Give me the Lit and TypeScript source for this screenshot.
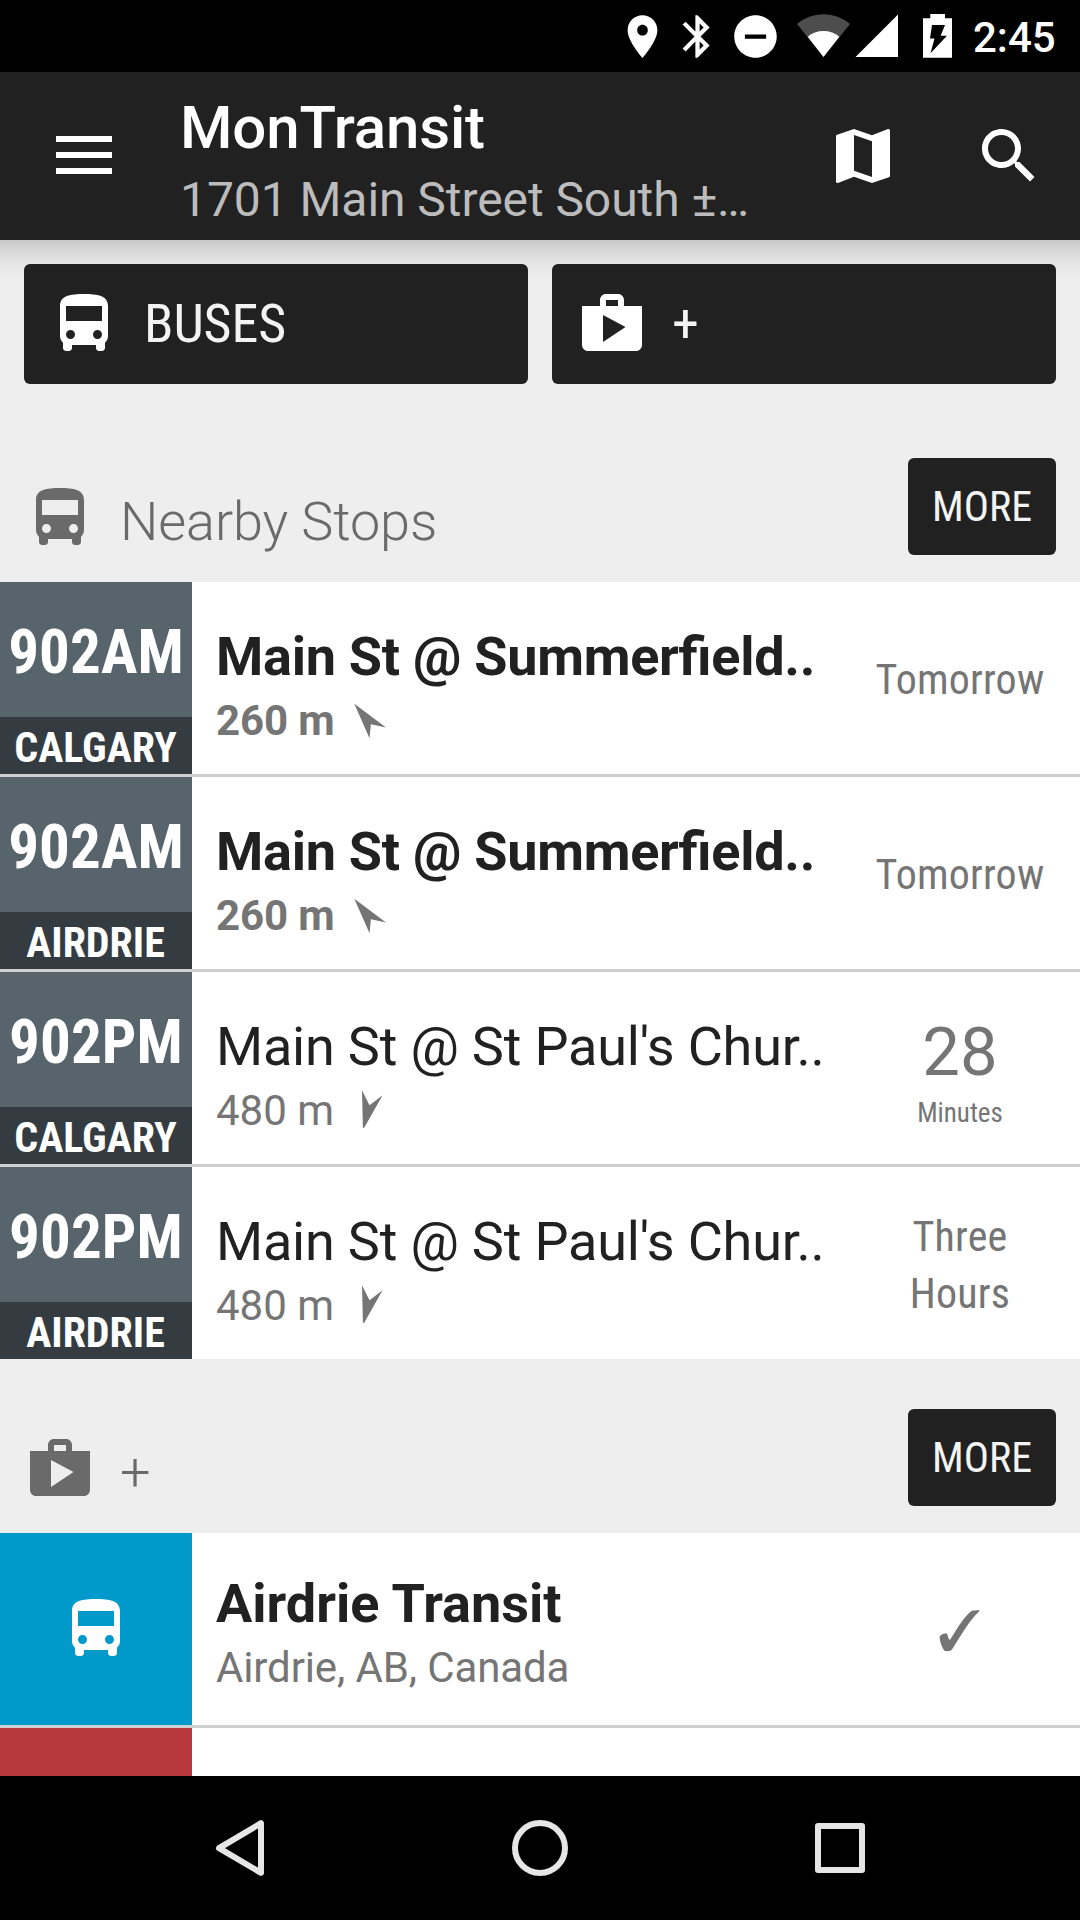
import { LitElement, html, css, svg } from "lit";
import { customElement, property } from "lit/decorators.js";
import { classMap } from "lit/directives/class-map.js";

const PATHS: Record<string, string> = {
  bus: "M4 16c0 .88.39 1.67 1 2.22V20c0 .55.45 1 1 1h1c.55 0 1-.45 1-1v-1h8v1c0 .55.45 1 1 1h1c.55 0 1-.45 1-1v-1.78c.61-.55 1-1.34 1-2.22V6c0-3.5-3.58-4-8-4s-8 .5-8 4v10zm3.5 1c-.83 0-1.5-.67-1.5-1.5S6.67 14 7.5 14s1.5.67 1.5 1.5S8.33 17 7.5 17zm9 0c-.83 0-1.5-.67-1.5-1.5s.67-1.5 1.5-1.5 1.5.67 1.5 1.5-.67 1.5-1.5 1.5zm1.5-6H6V6h12v5z",
  shop: "M16 6V4c0-1.11-.89-2-2-2h-4c-1.11 0-2 .89-2 2v2H2v13c0 1.11.89 2 2 2h16c1.11 0 2-.89 2-2V6h-6zm-6-2h4v2h-4V4zM9 18V9l7.5 4L9 18z",
  map: "M20.5 3l-.16.03L15 5.1 9 3 3.36 4.9c-.21.07-.36.25-.36.48V20.5c0 .28.22.5.5.5l.16-.03L9 18.9l6 2.1 5.64-1.9c.21-.07.36-.25.36-.48V3.5c0-.28-.22-.5-.5-.5zM15 19l-6-2.11V5l6 2.11V19z",
  search: "M15.5 14h-.79l-.28-.27C15.41 12.59 16 11.11 16 9.5 16 5.91 13.09 3 9.5 3S3 5.91 3 9.5 5.91 16 9.5 16c1.61 0 3.09-.59 4.23-1.57l.27.28v.79l5 4.99L20.49 19l-4.99-5zm-6 0C7.01 14 5 11.99 5 9.5S7.01 5 9.5 5 14 7.01 14 9.5 11.99 14 9.5 14z",
  place: "M12 2C8.13 2 5 5.13 5 9c0 5.25 7 13 7 13s7-7.75 7-13c0-3.87-3.13-7-7-7zm0 9.5c-1.38 0-2.5-1.12-2.5-2.5s1.12-2.5 2.5-2.5 2.5 1.12 2.5 2.5-1.12 2.5-2.5 2.5z",
  bluetooth: "M17.71 7.71L12 2h-1v7.59L6.41 5 5 6.41 10.59 12 5 17.59 6.41 19 11 14.41V22h1l5.71-5.71-4.3-4.29 4.3-4.29zM13 5.83l1.88 1.88L13 9.59V5.83zm1.88 10.46L13 18.17v-3.76l1.88 1.88z",
  dnd: "M12 2C6.48 2 2 6.48 2 12s4.48 10 10 10 10-4.48 10-10S17.52 2 12 2zm5 11H7v-2h10v2z",
};

@customElement("md-icon")
class MdIcon extends LitElement {
  @property() name = "bus";
  static styles = css`
    :host { display: block; width: 72px; height: 72px; flex: none; }
    .glyph { display: block; width: 100%; height: 100%; fill: currentColor; }
  `;
  render() {
    return html`<svg class="glyph" viewBox="0 0 24 24"><path d=${PATHS[this.name]} /></svg>`;
  }
}

@customElement("status-bar")
class StatusBar extends LitElement {
  static styles = css`
    :host { display: block; }
    .bar { height: 72px; box-sizing: border-box; background: #000; color: #fff; display: flex; padding-left: 617px; padding-top: 11px; }
    .s { width: 51px; height: 51px; }
    .bt { margin-left: 4px; }
    .dnd { margin-left: 7px; }
    .signals { flex: none; width: 155px; height: 46px; margin: 2px 0 0 16px; }
    .time { font: 500 42px/49px Roboto, sans-serif; margin: 2px 0 0 21px; }
  `;
  render() {
    return html`<div class="bar">
      <md-icon class="s" name="place"></md-icon>
      <md-icon class="s bt" name="bluetooth"></md-icon>
      <md-icon class="s dnd" name="dnd"></md-icon>
      <svg class="signals" viewBox="797 13 155 46">
        <path fill="#4d4d4d" d="M823.5 57L797 24C804.600 17.800 813.700 14.300 823.500 14.300S842.400 17.800 850 24Z" />
        <path fill="#fff" d="M823.500 57L807.700 36.800C812 33 817.500 31 823.500 31S835 33 839.300 36.800Z" />
        <path fill="#fff" d="M855.500 57H898V14.500Z" />
        <path fill="#fff" d="M930.300 14H945V18.300H952V57.700H923V18.300H930.300Z" />
        <path fill="#000" d="M932 25H945L940.600 35.700H947L930.500 53.300L934.500 38.600H930Z" />
      </svg>
      <span class="time">2:45</span>
    </div>`;
  }
}

@customElement("app-bar")
class AppBar extends LitElement {
  static styles = css`
    :host { display: block; }
    .bar { position: relative; height: 168px; background: #212121; color: #fff; display: flex; font-family: Roboto, sans-serif; }
    .menu { width: 56px; margin: 64px 68px 0 56px; display: flex; flex-direction: column; gap: 10px; }
    .line { height: 6px; background: #fff; }
    .titles { width: 647px; padding-top: 21px; }
    .title { font-size: 60px; line-height: 70px; font-weight: 500; letter-spacing: -.15px; }
    .sub { font-size: 48px; line-height: 56px; margin-top: 9px; color: #bcbcbc; white-space: nowrap; letter-spacing: -.06px; }
    .act { margin-top: 48px; }
    .find { margin-left: 74px; }
    .shadow { position: absolute; top: 168px; left: 0; right: 0; height: 40px; z-index: 2;
      background: linear-gradient(rgba(0,0,0,.16), rgba(0,0,0,.11) 20%, rgba(0,0,0,.04) 55%, rgba(0,0,0,0)); }
  `;
  render() {
    return html`<div class="bar">
      <div class="menu"><div class="line"></div><div class="line"></div><div class="line"></div></div>
      <div class="titles">
        <div class="title">MonTransit</div>
        <div class="sub">1701 Main Street South ±…</div>
      </div>
      <md-icon class="act" name="map"></md-icon>
      <md-icon class="act find" name="search"></md-icon>
      <div class="shadow"></div>
    </div>`;
  }
}

@customElement("section-header")
class SectionHeader extends LitElement {
  @property() icon = "bus";
  @property() label = "";
  static styles = css`
    :host { display: block; }
    .head { height: 174px; box-sizing: border-box; display: flex; justify-content: space-between; padding: 50px 24px 27px; font-family: Roboto, sans-serif; }
    .left { display: flex; align-items: center; gap: 24px; height: 72px; margin-top: 24px; color: #6a6a6a; }
    .label { font-size: 54px; line-height: 63px; font-weight: 300; padding-top: 6px; letter-spacing: -.1px; }
    .more { width: 148px; height: 97px; border-radius: 6px; background: #212121; color: #f3f3f3; display: flex; align-items: center; justify-content: center;
      font-family: "Roboto Condensed", Roboto, sans-serif; font-stretch: 75%; font-size: 42px; line-height: 49px; }
  `;
  render() {
    return html`<div class="head">
      <div class="left"><md-icon name=${this.icon}></md-icon><span class="label">${this.label}</span></div>
      <div class="more"><span>MORE</span></div>
    </div>`;
  }
}

interface Stop {
  route: string; dest: string; name: string; dist: string; bold: boolean;
  arrow: "nw" | "s"; when: string[]; countdown?: boolean;
}

const STOPS: Stop[] = [
  { route: "902AM", dest: "CALGARY", name: "Main St @ Summerfield..", dist: "260 m", bold: true, arrow: "nw", when: ["Tomorrow"] },
  { route: "902AM", dest: "AIRDRIE", name: "Main St @ Summerfield..", dist: "260 m", bold: true, arrow: "nw", when: ["Tomorrow"] },
  { route: "902PM", dest: "CALGARY", name: "Main St @ St Paul's Chur..", dist: "480 m", bold: false, arrow: "s", when: ["28", "Minutes"], countdown: true },
  { route: "902PM", dest: "AIRDRIE", name: "Main St @ St Paul's Chur..", dist: "480 m", bold: false, arrow: "s", when: ["Three", "Hours"] },
];

const ARROWS = {
  nw: svg`<path d="M4.300 1.700L36 25.500L20.900 22.300L19.500 36.300Z" />`,
  s: svg`<path d="M12 -1.800L19.500 13.200L32.600 3.200L14.200 35.700H12.900Z" />`,
};

@customElement("app-root")
class AppRoot extends LitElement {
  static styles = css`
    :host { display: block; width: 1080px; height: 1920px; overflow: hidden; font-family: Roboto, sans-serif; }
    .screen { display: flex; flex-direction: column; height: 1920px; background: #eee; }
    .content { height: 1536px; overflow: hidden; flex: none; }
    .buttons { display: grid; grid-template-columns: 1fr 1fr; gap: 24px; padding: 24px; }
    .btn { height: 120px; border-radius: 6px; background: #212121; color: #fff; display: flex; align-items: center; gap: 24px; padding-left: 24px; box-sizing: border-box; }
    .cond { font-family: "Roboto Condensed", Roboto, sans-serif; font-stretch: 75%; }
    .btn-label { font-size: 54px; line-height: 63px; color: #f3f3f3; padding-bottom: 2px; letter-spacing: -.1px; }
    .row { display: flex; height: 192px; background: #fff; }
    .row + .row { border-top: 3px solid #cfcfcf; }
    .badge { width: 192px; flex: none; display: flex; flex-direction: column; background: #57646c; color: #fff; font-weight: 700; text-align: center; }
    .route { height: 135px; box-sizing: border-box; padding-top: 35px; font-size: 61px; line-height: 70px; letter-spacing: .1px; }
    .dest { height: 57px; box-sizing: border-box; padding: 6px 1px 0 0; background: #343b41; font-size: 42px; line-height: 49px; }
    .info { width: 624px; flex: none; padding: 43px 0 0 24px; box-sizing: border-box; white-space: nowrap; }
    .name { font-size: 54px; line-height: 63px; color: #212121; letter-spacing: -.2px; font-feature-settings: "liga" 1; }
    .meta { display: flex; margin-top: 8px; font-size: 42px; line-height: 49px; color: #757575; }
    .meta.bold, .place .meta { letter-spacing: -.12px; }
    .bold { font-weight: 700; }
    .name.bold { letter-spacing: -.27px; }
    .arrow { width: 40px; height: 40px; overflow: visible; margin: 6px 0 0 16px; fill: #757575; }
    .dist { width: 118px; }
    .when { width: 240px; margin-left: 24px; padding-top: 3px; display: flex; flex-direction: column; justify-content: center; align-items: center; color: #757575; font-size: 42px; line-height: 57px; letter-spacing: .2px; }
    .count { font-size: 67px; line-height: 77px; padding-top: 4px; letter-spacing: 0; }
    .unit { font-size: 27px; line-height: 32px; padding-top: 6px; letter-spacing: 0; }
    .agency { align-items: center; justify-content: center; }
    .place { padding-top: 39px; }
    .place .name.bold { letter-spacing: 0; }
    .blue { background: #0099cc; }
    .red { background: #b7393d; }
    .tick { width: 42px; height: 44px; fill: #757575; }
    .nav { height: 144px; flex: none; background: #000; display: flex; justify-content: center; align-items: center; gap: 240px; }
    .nav-icon { width: 60px; height: 60px; fill: none; stroke: #e6e6e6; stroke-width: 6; stroke-linejoin: round; }
  `;

  private renderStop(s: Stop) {
    const bold = { bold: s.bold };
    return html`<div class="row">
      <div class="badge cond"><div class="route">${s.route}</div><div class="dest">${s.dest}</div></div>
      <div class="info">
        <div class=${classMap({ name: true, ...bold })}>${s.name}</div>
        <div class=${classMap({ meta: true, ...bold })}>
          <span class="dist">${s.dist}</span>
          <svg class="arrow" viewBox="0 0 40 40">${ARROWS[s.arrow]}</svg>
        </div>
      </div>
      <div class="when">
        ${s.countdown
          ? html`<span class="count">${s.when[0]}</span><span class="unit cond">${s.when[1]}</span>`
          : s.when.map((w) => html`<span class="cond">${w}</span>`)}
      </div>
    </div>`;
  }

  render() {
    return html`<div class="screen">
      <status-bar></status-bar>
      <app-bar></app-bar>
      <div class="content">
        <div class="buttons">
          <div class="btn"><md-icon name="bus"></md-icon><span class="btn-label cond">BUSES</span></div>
          <div class="btn"><md-icon name="shop"></md-icon><span class="btn-label cond">+</span></div>
        </div>
        <section-header icon="bus" label="Nearby Stops"></section-header>
        <div class="list">${STOPS.map((s) => this.renderStop(s))}</div>
        <section-header icon="shop" label="+"></section-header>
        <div class="list">
          <div class="row">
            <div class="badge agency blue"><md-icon name="bus"></md-icon></div>
            <div class="info place">
              <div class="name bold">Airdrie Transit</div>
              <div class="meta">Airdrie, AB, Canada</div>
            </div>
            <div class="when">
              <svg class="tick" viewBox="939 1610 42 44">
                <path d="M939.500 1637.500C941.500 1635 944.500 1634 947.300 1634.700C947.800 1637.500 948.500 1639.800 949.800 1641C953.500 1635.500 957.500 1628.500 961.500 1623C966 1616.800 970 1612.500 972.800 1611.500C974.500 1611.800 976.500 1611.200 979.200 1611C979.300 1611.600 979.300 1612 979 1612.600C969.500 1621.500 962 1635 954.500 1646.500C953 1649 951.800 1650.800 950.500 1651.800C948.500 1652.400 946 1652.300 944.300 1651.800C942 1648 940 1643.500 939.500 1637.500Z" />
              </svg>
            </div>
          </div>
          <div class="row"><div class="badge red"></div></div>
        </div>
      </div>
      <div class="nav">
        <svg class="nav-icon" viewBox="-30 -30 60 60"><path d="M-21 .2L21 -24.800V24.800Z" /></svg>
        <svg class="nav-icon" viewBox="-30 -30 60 60"><circle r="25" /></svg>
        <svg class="nav-icon" viewBox="-30 -30 60 60"><rect x="-22" y="-22" width="44" height="44" /></svg>
      </div>
    </div>`;
  }
}
